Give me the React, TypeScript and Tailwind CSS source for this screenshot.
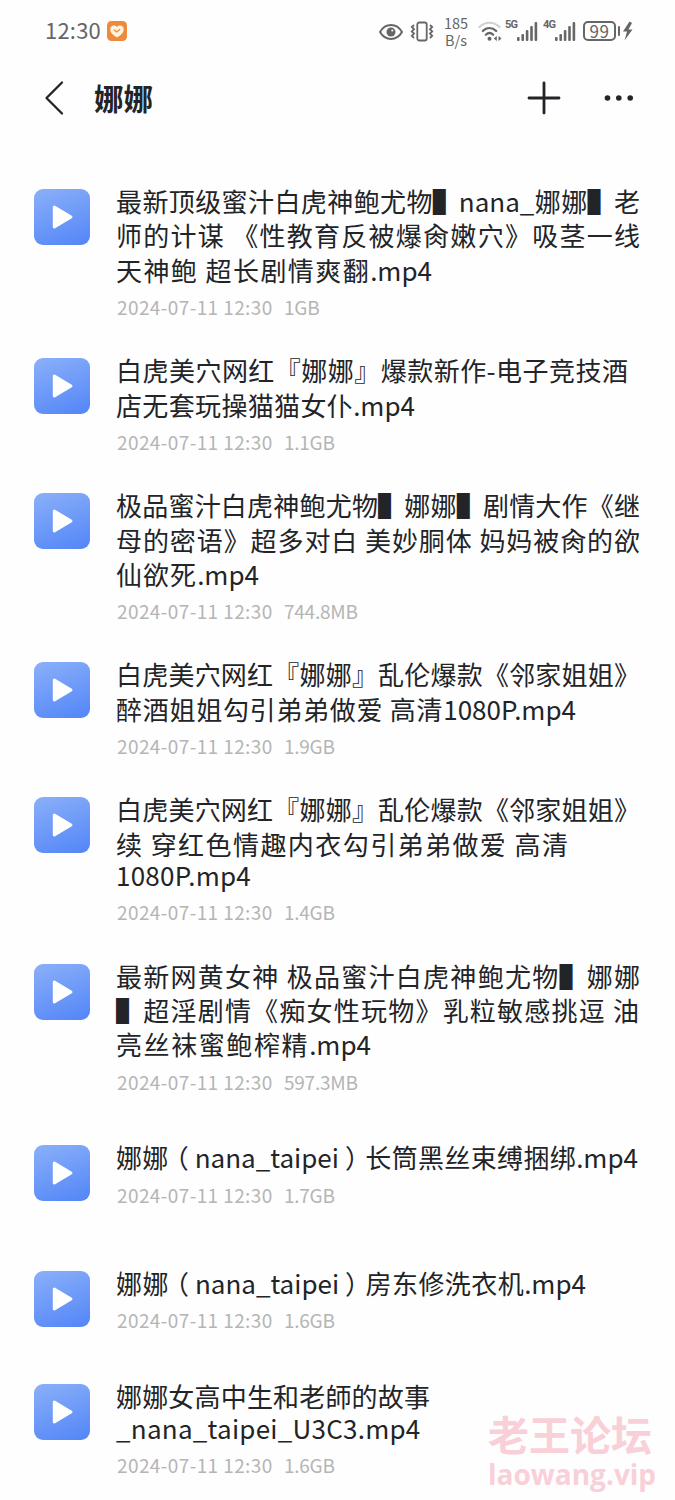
type Line = { text: string; width: number; latin?: boolean };
type FileItem = { lines: Line[]; size: string };

const DATE = "2024-07-11 12:30";

const files: FileItem[] = [
  {
    size: "1GB",
    lines: [
      { text: "最新顶级蜜汁白虎神鲍尤物▌nana_娜娜▌老", width: 524 },
      { text: "师的计谋 《性教育反被爆肏嫩穴》吸茎一线", width: 524 },
      { text: "天神鲍 超长剧情爽翻.mp4", width: 316 },
    ],
  },
  {
    size: "1.1GB",
    lines: [
      { text: "白虎美穴网红『娜娜』爆款新作-电子竞技酒", width: 512 },
      { text: "店无套玩操猫猫女仆.mp4", width: 299 },
    ],
  },
  {
    size: "744.8MB",
    lines: [
      { text: "极品蜜汁白虎神鲍尤物▌娜娜▌剧情大作《继", width: 524 },
      { text: "母的密语》超多对白 美妙胴体 妈妈被肏的欲", width: 524 },
      { text: "仙欲死.mp4", width: 143 },
    ],
  },
  {
    size: "1.9GB",
    lines: [
      { text: "白虎美穴网红『娜娜』乱伦爆款《邻家姐姐》", width: 524 },
      { text: "醉酒姐姐勾引弟弟做爱 高清1080P.mp4", width: 460 },
    ],
  },
  {
    size: "1.4GB",
    lines: [
      { text: "白虎美穴网红『娜娜』乱伦爆款《邻家姐姐》", width: 524 },
      { text: "续 穿红色情趣内衣勾引弟弟做爱 高清", width: 452 },
      { text: "1080P.mp4", width: 138, latin: true },
    ],
  },
  {
    size: "597.3MB",
    lines: [
      { text: "最新网黄女神 极品蜜汁白虎神鲍尤物▌娜娜", width: 524 },
      { text: "▌超淫剧情《痴女性玩物》乳粒敏感挑逗 油", width: 523 },
      { text: "亮丝袜蜜鲍榨精.mp4", width: 255 },
    ],
  },
  { size: "1.7GB", lines: [{ text: "娜娜（nana_taipei）长筒黑丝束缚捆绑.mp4", width: 522 }] },
  { size: "1.6GB", lines: [{ text: "娜娜（nana_taipei）房东修洗衣机.mp4", width: 470 }] },
  {
    size: "1.6GB",
    lines: [
      { text: "娜娜女高中生和老師的故事", width: 314 },
      { text: "_nana_taipei_U3C3.mp4", width: 302, latin: true },
    ],
  },
];

function Signal({ label }: { label: string }) {
  return (
    <div className="flex h-6 w-[33px] shrink-0 items-start">
      <span className="w-[12px] font-['Roboto',sans-serif] text-[11px] leading-[11px] font-bold tracking-[-0.8px]">{label}</span>
      <svg className="mt-[3px] h-5 w-[21px]" viewBox="0 0 21 20" fill="currentColor">
        <rect x="0" y="15" width="2.6" height="4" rx="1" />
        <rect x="4.4" y="12" width="2.6" height="7" rx="1" />
        <rect x="8.8" y="8" width="2.6" height="11" rx="1" />
        <rect x="13.2" y="4" width="2.6" height="15" rx="1" />
        <rect x="17.6" y="0" width="2.6" height="19" rx="1" />
      </svg>
    </div>
  );
}

function StatusBar() {
  return (
    <div className="flex h-[62px] items-center pl-[45px] text-[#666]">
      <span className="-mt-1 w-[62px] font-['Noto_Sans_CJK_SC',sans-serif] text-[22px] leading-6 tracking-[0.2px]">12:30</span>
      <svg className="h-5 w-5 shrink-0" viewBox="0 0 20 20">
        <rect width="20" height="20" rx="4.5" fill="#ee8a3c" />
        <path d="M10 16.5C6 14 3.3 11.6 3.3 8.2C3.3 4.8 7.5 3.3 10 6C12.5 3.3 16.7 4.8 16.7 8.2C16.7 11.6 14 14 10 16.5Z" fill="#fff3e0" />
        <path d="M7.200 9L9.700 11L12.800 8.500" fill="none" stroke="#ee8a3c" strokeWidth="1.2" strokeLinecap="round" />
      </svg>
      <div className="ml-[252px] flex items-center">
        {/* eye comfort */}
        <svg className="h-5 w-6" viewBox="0 0 24 20" fill="none" stroke="currentColor" strokeWidth="2">
          <path d="M1 11C6.5 1.700 17.5 1.700 23 11C17.5 20.300 6.5 20.300 1 11Z" />
          <circle cx="12" cy="11" r="4.5" fill="currentColor" stroke="none" />
          <circle cx="13.3" cy="9.500" r="1.100" fill="#fff" stroke="none" />
        </svg>
        {/* vibrate */}
        <svg className="ml-[7px] h-[22px] w-6" viewBox="0 0 24 22" fill="none" stroke="currentColor" strokeWidth="1.8">
          <rect x="7.3" y="2.500" width="9.4" height="18" rx="2" />
          <path d="M4 5L1.800 7L4 9.200L1.800 11.400L4 13.600L1.800 15.800L4 18M20 5L22.200 7L20 9.200L22.200 11.400L20 13.600L22.200 15.800L20 18" />
        </svg>
        <div className="ml-2 w-[28px] text-center font-['Noto_Sans_CJK_SC',sans-serif] text-[14.500px] leading-[17px]">
          <div>185</div>
          <div>B/s</div>
        </div>
        <svg className="ml-2 h-[22px] w-[24px]" viewBox="0 0 24 22" fill="none" strokeWidth="2.2" strokeLinecap="round">
          <path d="M1.5 7C7 1.300 16 1.300 21.5 7" stroke="#d0d0d0" />
          <path d="M4.8 11C8.8 7 14.2 7 18.2 11M7.8 14.700C10.2 12.500 12.8 12.500 15.2 14.700" stroke="currentColor" />
          <circle cx="11.5" cy="18.800" r="2" fill="currentColor" />
          <path d="M15.800 18.500L18.800 16V21ZM23.500 18.500L20.500 16V21Z" fill="currentColor" />
        </svg>
        <div className="ml-[3px] flex gap-[5px]">
          <Signal label="5G" />
          <Signal label="4G" />
        </div>
        <div className="ml-[7px] flex h-5 w-[33px] items-center justify-center rounded-[5px] border-2 border-current font-['Noto_Sans_CJK_SC',sans-serif] text-[17px] leading-4 tracking-[0.500px]">
          99
        </div>
        <svg className="ml-0.5 h-5 w-[17px]" viewBox="0 0 17 20" fill="currentColor">
          <rect x="0" y="5" width="2" height="10" rx="1" />
          <path d="M11.500 0.500L5 10.500H9L6.500 19.500L14.500 8.500H10.500L14 2Z" />
        </svg>
      </div>
    </div>
  );
}

function Header() {
  return (
    <header className="flex h-[72px] items-center pl-[44px] text-[#222428]">
      <svg className="h-9 w-5" viewBox="0 0 20 36" fill="none" stroke="currentColor" strokeWidth="2.3" strokeLinecap="round" strokeLinejoin="round">
        <path d="M18 2.5L2.500 18L18 33.5" />
      </svg>
      <h1 className="-mt-[3px] ml-[30px] text-[29.5px] leading-9 font-bold">娜娜</h1>
      <svg className="ml-auto h-9 w-9" viewBox="0 0 36 36" stroke="currentColor" strokeWidth="2.8" strokeLinecap="round">
        <path d="M18 3V33M3 18H33" />
      </svg>
      <svg className="mr-10 ml-[41px] h-9 w-[32px]" viewBox="0 0 32 36" fill="currentColor">
        <circle cx="4.500" cy="18" r="2.8" />
        <circle cx="15.800" cy="18" r="2.8" />
        <circle cx="27.200" cy="18" r="2.8" />
      </svg>
    </header>
  );
}

function VideoIcon() {
  return (
    <div className="mt-[5px] flex h-14 w-14 shrink-0 items-center justify-center rounded-[9px] bg-linear-[160deg] from-[#8bb0f9] to-[#5285f7]">
      <svg className="h-[26px] w-6" viewBox="0 0 24 26">
        <path d="M4.300 3L21 13L4.300 23Z" fill="#fff" stroke="#fff" strokeWidth="3" strokeLinejoin="round" />
      </svg>
    </div>
  );
}

function TitleLine({ line }: { line: Line }) {
  // brackets sit in the middle of their cell
  const parts = line.text.split(/([（）])/);
  return (
    <div
      className={`${line.latin ? "h-[31.4px] leading-[28px] tracking-[0.25px]" : "h-[34.4px] leading-[34.4px]"} whitespace-nowrap [text-align-last:justify]`}
      style={{ width: line.width }}
    >
      {parts.map((p, i) => {
        if (p === "（") return <span key={i} className="inline-block -translate-x-[6px]">{p}</span>;
        if (p === "）") return <span key={i} className="inline-block translate-x-[6px]">{p}</span>;
        return p;
      })}
    </div>
  );
}

function FileRow({ file }: { file: FileItem }) {
  return (
    <li className={file.lines.length === 1 ? "flex py-[12.6px]" : "flex"}>
      <VideoIcon />
      <div className="ml-[26px]">
        <div className="text-[26px] text-[#222428]">
          {file.lines.map((line) => (
            <TitleLine key={line.text} line={line} />
          ))}
        </div>
        <div className="mt-2 mb-[34.1px] ml-px flex h-6 text-[19px] leading-6 text-[#b5b5b5]">
          <span className="w-[167px] tracking-[0.4px] whitespace-nowrap">{DATE}</span>
          <span className="tracking-[-0.25px]">{file.size}</span>
        </div>
      </div>
    </li>
  );
}

export default function App() {
  return (
    <div lang="zh-CN" className="relative h-[1500px] w-[675px] overflow-hidden bg-[#fefefe] font-['Noto_Sans_CJK_SC',sans-serif]">
      <StatusBar />
      <Header />
      <ul className="pt-[50px] pl-[34px]">
        {files.map((file, i) => (
          <FileRow key={i} file={file} />
        ))}
      </ul>
      {/* watermark */}
      <div className="absolute top-[1409px] left-[488px] font-bold whitespace-nowrap text-[#f9d0d7]">
        <div className="text-[41px] leading-[48px]">老王论坛</div>
        <div className="font-['Open_Sans',sans-serif] text-[28px] leading-[34px]">laowang.vip</div>
      </div>
    </div>
  );
}
